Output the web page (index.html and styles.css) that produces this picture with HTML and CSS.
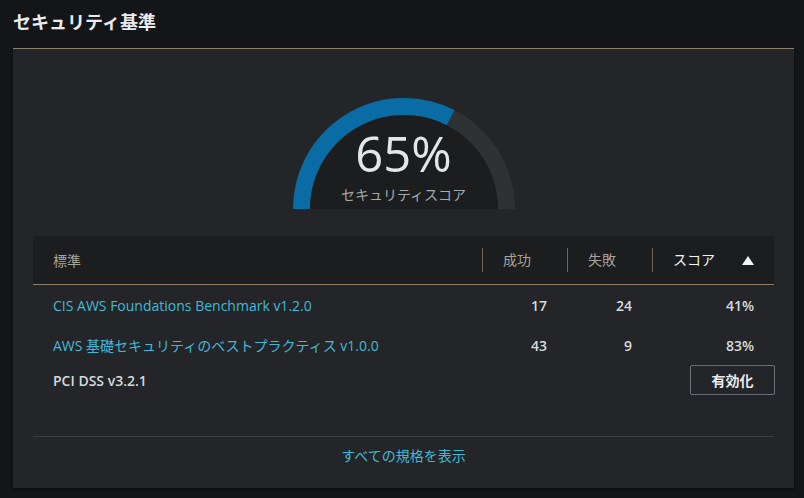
FILE: index.html
```html
<!DOCTYPE html>
<html lang="ja">
<head>
<meta charset="utf-8">
<link rel="stylesheet" href="styles.css">
</head>
<body>
<div class="page">
  <h2 class="title">セキュリティ基準</h2>
  <section class="card">
    <div class="gauge">
      <svg width="222" height="111" viewBox="0 0 222 111">
        <path d="M 8.5 111 A 102.5 102.5 0 0 1 213.5 111" fill="none" stroke="#2e3235" stroke-width="17"/>
        <path d="M 8.5 111 A 102.5 102.5 0 0 1 157.5 19.7" fill="none" stroke="#0a6ca5" stroke-width="17"/>
        <path d="M 17 111 A 94 94 0 0 1 205 111 Z" fill="#1b1d1f"/>
      </svg>
      <div class="gauge-text">
        <div class="pct">65%</div>
        <div class="label">セキュリティスコア</div>
      </div>
    </div>
    <div class="table">
      <div class="row head">
        <div class="cell">標準</div>
        <div class="cell sep">成功</div>
        <div class="cell sep">失敗</div>
        <div class="cell sep sorted"><span>スコア</span><span class="tri"></span></div>
      </div>
      <div class="row">
        <div class="cell"><a class="link">CIS AWS Foundations Benchmark v1.2.0</a></div>
        <div class="cell num">17</div>
        <div class="cell num">24</div>
        <div class="cell num">41%</div>
      </div>
      <div class="row">
        <div class="cell"><a class="link">AWS 基礎セキュリティのベストプラクティス v1.0.0</a></div>
        <div class="cell num">43</div>
        <div class="cell num">9</div>
        <div class="cell num">83%</div>
      </div>
      <div class="row last">
        <div class="cell plain">PCI DSS v3.2.1</div>
        <div class="cell"></div>
        <div class="cell"></div>
        <div class="cell btncell"><button class="btn">有効化</button></div>
      </div>
    </div>
    <div class="footer"><a class="link">すべての規格を表示</a></div>
  </section>
</div>
</body>
</html>
```
FILE: styles.css
```css
* { box-sizing: border-box; }
html, body { margin: 0; padding: 0; }
body {
  background: #131519;
  font-family: "Open Sans", "Noto Sans CJK JP", sans-serif;
  color: #d5dbdb;
  width: 804px;
  height: 498px;
  overflow: hidden;
}
.page { padding: 0 10px 0 13px; }
.title {
  margin: 0;
  height: 48px;
  padding-top: 9px;
  font-size: 18px;
  font-weight: 700;
  color: #e9ebed;
  line-height: 26px;
}
.card {
  background: #232528;
  border-top: 1px solid #8c806c;
  height: 440px;
  padding: 0 20px;
  display: flex;
  flex-direction: column;
  box-shadow: 0 1px 2px rgba(0,0,0,0.5);
}
.gauge {
  position: relative;
  width: 222px;
  height: 111px;
  margin: 49px auto 0;
}
.gauge svg { display: block; }
.gauge-text {
  position: absolute;
  left: 0; right: 0; top: 31px;
  text-align: center;
}
.pct {
  font-size: 49px;
  line-height: 48px;
  color: #e3e6e8;
  font-weight: 400;
}
.label {
  font-size: 14px;
  line-height: 14px;
  color: #a5abab;
  margin-top: 11px;
}
.table { margin-top: 27px; }
.row {
  display: grid;
  grid-template-columns: 449px 85px 85px 1fr;
  height: 40px;
  align-items: center;
  font-size: 14px;
}
.row.head {
  height: 49px;
  background: #1b1d1f;
  border-bottom: 1px solid #8c806c;
  color: #a8a39b;
  font-size: 14px;
}
.cell { padding: 0 20px; white-space: nowrap; }
.sep {
  border-left: 1px solid #6e6454;
  line-height: 24px;
}
.sorted {
  color: #f2f3f3;
  display: flex;
  justify-content: space-between;
  align-items: center;
}
.tri {
  width: 0; height: 0;
  border-left: 6px solid transparent;
  border-right: 6px solid transparent;
  border-bottom: 9px solid #f2f3f3;
  margin-right: 0px;
}
.num { text-align: right; font-weight: 600; color: #d5dbdb; }
.link { color: #44b9d6; text-decoration: none; font-size: 14px; }
.plain { font-weight: 600; color: #d5dbdb; }
.row.last { height: 30px; }
.btncell { display: flex; justify-content: flex-end; padding-right: 0; margin-right: -1px; }
.btn {
  font-family: inherit;
  font-size: 14px;
  font-weight: 700;
  color: #e9ebed;
  background: transparent;
  border: 1px solid #687078;
  border-radius: 2px;
  width: 85px;
  height: 30px;
  padding: 0;
}
.footer {
  margin-top: 41px;
  border-top: 1px solid #3a3e42;
  text-align: center;
  padding-top: 8px;
  line-height: 20px;
}
```
